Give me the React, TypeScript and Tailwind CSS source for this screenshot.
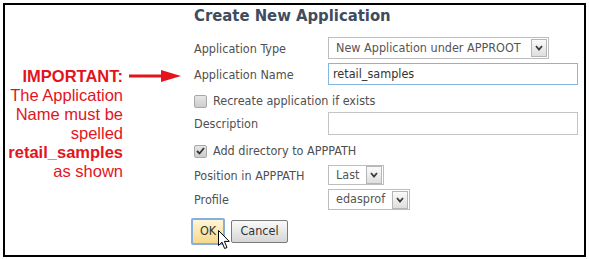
import React from 'react';

const formFont = "font-['DejaVu_Sans_Condensed','DejaVu_Sans',sans-serif] [font-stretch:condensed]";

function Chevron() {
  return (
    <span className="flex h-[18px] w-[16px] items-center justify-center border border-[#b5b5b5] bg-gradient-to-b from-[#fbfbfb] to-[#dedede]">
      <svg width="8" height="6" viewBox="0 0 8 6">
        <path d="M1 1 L4 4.5 L7 1" fill="none" stroke="#3a3a3a" strokeWidth="1.8" />
      </svg>
    </span>
  );
}

function Select({ value, width }: { value: string; width: string }) {
  return (
    <div className={`flex h-full items-center justify-between border border-[#bdbdbd] bg-white pl-[7px] pr-[1px] ${width}`}>
      <span className="text-[12.5px] text-[#555]">{value}</span>
      <Chevron />
    </div>
  );
}

function Checkbox({ checked }: { checked?: boolean }) {
  return (
    <span className="flex h-[13px] w-[13px] items-center justify-center rounded-[2px] border border-[#a8a8a8] bg-gradient-to-b from-[#e6e6e6] to-[#cdcdcd]">
      {checked && (
        <svg width="9" height="8" viewBox="0 0 9 8">
          <path d="M1 4 L3.5 6.5 L8 1" fill="none" stroke="#333" strokeWidth="1.8" />
        </svg>
      )}
    </span>
  );
}

function Row({ label, children, className }: { label: string; children: React.ReactNode; className: string }) {
  return (
    <div className={`flex items-center ${className}`}>
      <span className="w-[134px] shrink-0 pt-[2px] text-[12.5px] text-[#505050]">{label}</span>
      {children}
    </div>
  );
}

export default function App() {
  return (
    <div className="h-[259px] w-[589px] bg-white p-[3px]">
      <div className="box-border flex h-[254px] w-[583px] border-2 border-black bg-white">

        {/* Red note */}
        <div className="w-[118px] shrink-0 pt-[62px] text-right font-['Liberation_Sans',Arial,sans-serif] text-[16.5px] leading-[19px] text-[#e3141d]">
          <div className="font-bold">IMPORTANT:</div>
          <div>The Application</div>
          <div>Name must be</div>
          <div>spelled</div>
          <div className="font-bold">retail_samples</div>
          <div>as shown</div>
        </div>

        {/* Arrow */}
        <svg width="52" height="12" viewBox="0 0 52 12" className="ml-[6px] mt-[65px] shrink-0">
          <rect x="0" y="4.5" width="34" height="3" fill="#e3141d" />
          <path d="M32 0 L52 6 L32 12 Z" fill="#e3141d" />
        </svg>

        {/* Form */}
        <div className={`ml-[13px] flex flex-col ${formFont}`}>
          <div className="mt-[1px] h-[20px] text-[16.5px] font-bold leading-[20px] text-[#3e4c5e]">
            Create New Application
          </div>

          <Row label="Application Type" className="mt-[11px] h-[22px]">
            <Select value="New Application under APPROOT" width="w-[221px]" />
          </Row>

          <Row label="Application Name" className="mt-[4px] h-[22px]">
            <div className="flex h-full w-[250px] items-center border border-[#84b6e2] bg-white pl-[4px] text-[12.5px] text-[#333]">
              retail_samples
            </div>
          </Row>

          <div className="mt-[6px] flex h-[20px] items-center gap-[6px] text-[12.5px] text-[#505050]">
            <Checkbox />
            <span>Recreate application if exists</span>
          </div>

          <Row label="Description" className="mt-[1px] h-[23px]">
            <div className="h-full w-[250px] border border-[#c4c4c4] bg-white" />
          </Row>

          <div className="mt-[6px] flex h-[20px] items-center gap-[6px] text-[12.5px] text-[#505050]">
            <Checkbox checked />
            <span>Add directory to APPPATH</span>
          </div>

          <Row label="Position in APPPATH" className="mt-[4px] h-[20px]">
            <Select value="Last" width="w-[56px]" />
          </Row>

          <Row label="Profile" className="mt-[4px] h-[21px]">
            <Select value="edasprof" width="w-[82px]" />
          </Row>

          <div className="relative mt-[8px] flex items-center gap-[6px]">
            <button className="-ml-[3px] flex h-[27px] w-[34px] items-center justify-center rounded-[2px] border-2 border-[#86aede] bg-gradient-to-b from-[#fef6d6] to-[#f6d88a] text-[12.5px] text-[#333]">
              OK
            </button>
            <button className="flex h-[23px] w-[57px] items-center justify-center rounded-[2px] border border-[#7a7a7a] bg-gradient-to-b from-[#fafafa] to-[#d6d6d6] text-[12.5px] text-[#333]">
              Cancel
            </button>
            {/* Mouse pointer */}
            <svg width="13" height="20" viewBox="0 0 13 20" className="absolute left-[24px] top-[12px]">
              <path d="M0.5 0.5 L0.5 15.5 L4 12.2 L6.6 18.5 L9 17.5 L6.4 11.4 L11.3 11.4 Z" fill="white" stroke="black" strokeWidth="1" strokeLinejoin="round" />
            </svg>
          </div>
        </div>
      </div>
    </div>
  );
}
